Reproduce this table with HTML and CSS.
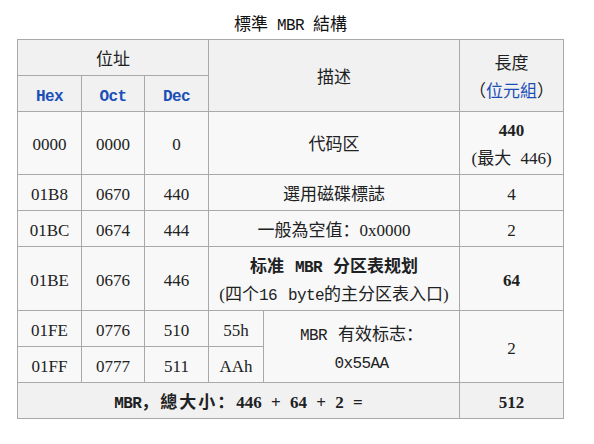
FILE: index.html
```html
<!DOCTYPE html>
<html lang="zh">
<head>
<meta charset="utf-8">
<title>標準 MBR 結構</title>
<link rel="stylesheet" href="styles.css">
</head>
<body>
<div class="wrap">
<div class="title"><span class="z">標準</span><span class="m mono gap">MBR</span><span class="z">結構</span></div>
<table class="mbr">
  <colgroup>
    <col class="c1"><col class="c2"><col class="c3"><col class="c4"><col class="c5"><col class="c6">
  </colgroup>
  <thead>
    <tr class="h1">
      <th colspan="3"><span class="z">位址</span></th>
      <th colspan="2" rowspan="2"><span class="z">描述</span></th>
      <th rowspan="2"><span class="z">長度</span><br><span class="z">（<span class="link">位元組</span>）</span></th>
    </tr>
    <tr class="h2">
      <th><span class="m mono link b">Hex</span></th>
      <th><span class="m mono link b">Oct</span></th>
      <th><span class="m mono link b">Dec</span></th>
    </tr>
  </thead>
  <tbody>
    <tr class="r-code">
      <td><span class="m">0000</span></td><td><span class="m">0000</span></td><td><span class="m">0</span></td>
      <td colspan="2"><span class="z">代码区</span></td>
      <td><span class="m b">440</span><br><span class="m">(</span><span class="z">最大</span><span class="m"> 446)</span></td>
    </tr>
    <tr class="r">
      <td><span class="m">01B8</span></td><td><span class="m">0670</span></td><td><span class="m">440</span></td>
      <td colspan="2"><span class="z">選用磁碟標誌</span></td>
      <td><span class="m">4</span></td>
    </tr>
    <tr class="r">
      <td><span class="m">01BC</span></td><td><span class="m">0674</span></td><td><span class="m">444</span></td>
      <td colspan="2"><span class="z">一般為空值：</span><span class="m">0x0000</span></td>
      <td><span class="m">2</span></td>
    </tr>
    <tr class="r-part">
      <td><span class="m">01BE</span></td><td><span class="m">0676</span></td><td><span class="m">446</span></td>
      <td colspan="2"><span class="z b">标准</span><span class="m mono b"> MBR </span><span class="z b">分区表规划</span><br><span class="m">(</span><span class="z">四个</span><span class="m mono">16 byte</span><span class="z">的主分区表入口</span><span class="m">)</span></td>
      <td><span class="m b">64</span></td>
    </tr>
    <tr class="r">
      <td><span class="m">01FE</span></td><td><span class="m">0776</span></td><td><span class="m">510</span></td>
      <td><span class="m">55h</span></td>
      <td rowspan="2"><span class="m mono">MBR </span><span class="z">有效标志：</span><br><span class="m mono">0x55AA</span></td>
      <td rowspan="2"><span class="m">2</span></td>
    </tr>
    <tr class="r">
      <td><span class="m">01FF</span></td><td><span class="m">0777</span></td><td><span class="m">511</span></td>
      <td><span class="m">AAh</span></td>
    </tr>
  </tbody>
  <tfoot>
    <tr class="r total">
      <td colspan="5"><span class="m mono b">MBR</span><span class="z b wide">，總大小：</span><span class="m b">446 + 64 + 2 =</span></td>
      <td><span class="m b">512</span></td>
    </tr>
  </tfoot>
</table>
</div>
</body>
</html>
```

FILE: styles.css
```css
html, body {
  margin: 0;
  padding: 0;
  background: #ffffff;
}

.wrap {
  padding: 9px 0 0 17px;
}

.title {
  width: 547px;
  height: 30px;
  line-height: 28px;
  text-align: center;
  color: #111111;
  font-family: "Noto Sans CJK SC", sans-serif;
  font-size: 17px;
}

.gap {
  margin: 0 9px;
}

.mbr {
  border-collapse: collapse;
  table-layout: fixed;
  width: 547px;
  color: #202122;
  font-family: "Noto Sans CJK SC", sans-serif;
  font-size: 17px;
  line-height: 28px;
  background: #f8f8f8;
  border: 1px solid #a9a9a9;
}

.c1 { width: 64px; }
.c2 { width: 63px; }
.c3 { width: 64px; }
.c4 { width: 55px; }
.c5 { width: 196px; }
.c6 { width: 104px; }

.mbr th,
.mbr td {
  border: 1px solid #a9a9a9;
  padding: 0 4px;
  text-align: center;
  vertical-align: middle;
  font-weight: normal;
}

.mbr thead th,
.mbr tfoot td {
  background: #f1f1f1;
}

.h1, .h2 { height: 36px; }
.r { height: 36px; }
.r-code { height: 63px; }
.r-part { height: 64px; }

.z {
  font-family: "Noto Sans CJK SC", sans-serif;
  font-size: 17px;
  line-height: 1;
}

.m {
  font-family: "Liberation Serif", serif;
  font-size: 17px;
  line-height: 1;
  word-spacing: 5px;
}

.m.mono {
  font-family: "Liberation Mono", monospace;
  font-size: 16px;
  letter-spacing: -0.6px;
  word-spacing: 2px;
}

.wide {
  letter-spacing: 2px;
}

.mbr .b {
  font-weight: bold;
}

.link {
  color: #1a4fb8;
}
```
